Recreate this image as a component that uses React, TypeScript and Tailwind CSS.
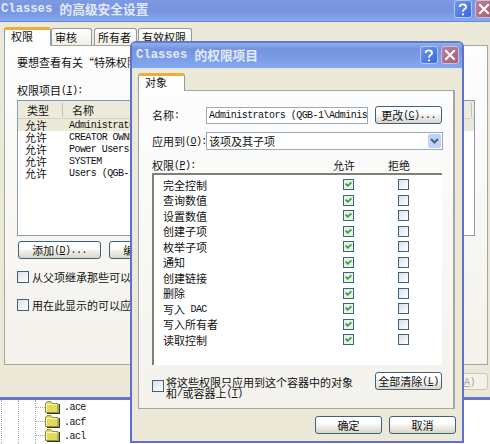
import React from 'react';

const MONO = "font-['Liberation_Mono','Noto_Sans_CJK_SC',monospace]";

/* Full-width text at 11px with half-width Latin runs at half that advance. */
function T({ children, className = '' }: { children: string; className?: string }) {
  const parts = children.match(/[\x00-\x7f]+|[^\x00-\x7f]+/g) || [];
  return (
    <span className={`whitespace-pre inline-flex items-center h-3 leading-3 ${className}`}>
      {parts.map((p, i) =>
        /^[\x00-\x7f]/.test(p) ? (
          <span key={i} className={`${MONO} text-[10px] tracking-[-0.55px] leading-3 mt-[2px]`}>
            {p.split(/(_[A-Z])/).map((s, j) => (s[0] === '_' ? <u key={j}>{s[1]}</u> : s))}
          </span>
        ) : (
          <span key={i} className="font-['Noto_Sans_CJK_SC',sans-serif] text-[11px] leading-3">{p}</span>
        )
      )}
    </span>
  );
}

function Title({ latin, cjk }: { latin: string; cjk: string }) {
  return (
    <span className="flex items-center whitespace-pre text-[#e3ebff] font-bold h-4">
      <span className={`${MONO} text-[12.2px] leading-4`}>{latin + ' '}</span>
      <span className="font-['Noto_Sans_CJK_SC',sans-serif] text-[12.7px] leading-4 font-bold">{cjk}</span>
    </span>
  );
}

function HelpButton() {
  return (
    <span className="w-[18px] h-[18px] shrink-0 rounded-[3px] border border-[#b4c8f6] bg-linear-to-br from-[#6f98ec] to-[#3b66dc] flex items-center justify-center">
      <svg width="10" height="13" viewBox="0 0 10 13" fill="none" stroke="#fff" strokeWidth="1.9">
        <path d="M1.8 4V3.3Q2.2 1.4 4.8 1.4Q8 1.4 8 3.9Q8 5.2 6.6 6Q5 7 5 8.8" />
        <path d="M4 11.4H6" />
      </svg>
    </span>
  );
}

function CloseButton() {
  return (
    <span className="w-[18px] h-[18px] shrink-0 rounded-[3px] border border-[#c6bfe4] bg-linear-to-br from-[#b98299] to-[#a85f70] flex items-center justify-center">
      <svg width="12" height="12" viewBox="0 0 12 12" stroke="#fff" strokeWidth="2">
        <path d="M1.3 1.3L10.7 10.7M10.7 1.3L1.3 10.7" />
      </svg>
    </span>
  );
}

function Button({ children, className = '' }: { children: string; className?: string }) {
  return (
    <span className={`h-[18px] shrink-0 rounded-[3px] border border-[#40627f] bg-linear-to-b from-white from-40% via-[#f5f4ef] to-[#d9d6cb] flex items-center justify-center ${className}`}>
      <T>{children}</T>
    </span>
  );
}

function Check({ on = false, className = '' }: { on?: boolean; className?: string }) {
  return (
    <span className={`shrink-0 border border-[#41627f] flex items-center justify-center ${on ? 'bg-[#e2f4e6]' : 'bg-linear-to-br from-[#dcdfe2] to-white'} ${className}`}>
      {on && (
        <svg width="7" height="7" viewBox="0 0 7 7" fill="none" stroke="#479447" strokeWidth="1.8">
          <path d="M.7 2.6L2.7 4.8L6.4 1.3" />
        </svg>
      )}
    </span>
  );
}

function Folder() {
  return (
    <svg width="15" height="13" viewBox="0 0 15 13">
      <path d="M2 12.3H14.3V3" fill="none" stroke="#33331f" strokeWidth="1.3" />
      <path d="M.5 11.5V2.5L2 .6H6L7.5 2.5H13V11.5Z" fill="#e1dc55" stroke="#8d8b48" />
      <path d="M1.5 10.5V3.5H12" fill="none" stroke="#fbf8bd" />
    </svg>
  );
}

const users = ['Administrators', 'CREATOR OWNER', 'Power Users', 'SYSTEM', 'Users (QGB-1'];
const rights = ['完全控制', '查询数值', '设置数值', '创建子项', '枚举子项', '通知', '创建链接', '删除', '写入 DAC', '写入所有者', '读取控制'];
const tab = 'h-[17px] shrink-0 border border-b-0 border-[#919b9c] rounded-t-[3px] bg-linear-to-b from-white to-[#f0efe6] flex items-start pt-[2px] pl-[3px]';

function SecurityWindow() {
  return (
    <div className="absolute left-0 top-0 w-[490px] h-[400px] bg-[#ece9d8] border-b-[3px] border-[#6674cb] flex flex-col overflow-hidden">
      <div className="h-[22px] shrink-0 bg-linear-to-b from-[#7f9ae3] via-[#7793df] to-[#83a9ef] border-b border-[#6c87cf] flex items-center pl-[1px] pb-[3px]">
        <Title latin="Classes" cjk="的高级安全设置" />
        <span className="ml-auto flex gap-[3px] -mr-[3px]"><HelpButton /><CloseButton /></span>
      </div>
      <div className="h-[23px] shrink-0 flex items-end pl-1">
        <span className="w-[47px] h-[19px] -mb-px z-1 shrink-0 border-x border-[#919b9c] border-t-[3px] border-t-[#f0ab3e] rounded-t-[3px] bg-[#fdfdfd] pl-[6px] flex"><T>权限</T></span>
        <span className={`${tab} w-[41px]`}><T>审核</T></span>
        <span className={`${tab} w-[43px] ml-[2px]`}><T>所有者</T></span>
        <span className={`${tab} w-[54px] ml-px`}><T>有效权限</T></span>
      </div>
      <div className="ml-1 w-[484px] h-[320px] shrink-0 border border-[#a3a89e] bg-linear-to-b from-[#fdfdfe] to-[#f3f2ec] flex flex-col items-start pl-3 pt-[10px]">
        <T>要想查看有关“特殊权限”的详细信息</T>
        <T className="mt-4">{'权限项目(_I):'}</T>
        <div className="mt-1 w-[458px] h-[136px] shrink-0 border border-[#849bb2] bg-white flex flex-col">
          <div className="h-[18px] shrink-0 bg-[#ebeadb] border-b border-[#d4d1c1] flex items-center pl-[9px]">
            <T className="w-[35px]">类型</T>
            <span className="h-[14px] border-l border-[#c5c2b0] mr-[9px]" />
            <T>名称</T>
            <span className="h-[14px] border-l border-[#c5c2b0] ml-auto mr-[2px]" />
          </div>
          {users.map((u, i) => (
            <div key={u} className={`h-3 shrink-0 flex pl-[7px] ${i === 0 ? 'bg-[#ece9d8]' : ''}`}>
              <T className="w-11">允许</T>
              <T>{u}</T>
            </div>
          ))}
        </div>
        <div className="mt-[5px] ml-px flex gap-2">
          <Button className="w-[83px]">{'添加(_D)...'}</Button>
          <Button className="w-[83px]">{'编辑(_E)...'}</Button>
        </div>
        <div className="mt-3 flex items-center gap-[3px]"><Check className="size-3" /><T>从父项继承那些可以</T></div>
        <div className="mt-4 flex items-center gap-[3px]"><Check className="size-3" /><T>用在此显示的可以应</T></div>
      </div>
      <div className="mt-2 flex justify-end pr-[2px]">
        <span className="w-[67px] h-[17px] rounded-[3px] border border-[#cbc8b8] bg-[#f3f1e8] text-[#aaa797] flex items-center justify-end pr-3"><T>{'应用(_A)'}</T></span>
      </div>
    </div>
  );
}

function EntryDialog() {
  return (
    <div className="absolute left-[130px] top-[41px] w-[334px] h-[402px] rounded-t-[6px] bg-[#ece9d8] border-2 border-[#6270ca] border-t-[#5f7ccd] flex flex-col overflow-hidden">
      <div className="h-[25px] shrink-0 bg-linear-to-b from-[#8fb0f0] via-[#7592df] via-25% to-[#82a9ef] flex items-center pl-1 pb-px">
        <Title latin="Classes" cjk="的权限项目" />
        <span className="ml-auto flex gap-[3px] pr-[3px]"><HelpButton /><CloseButton /></span>
      </div>
      <div className="grow border-t border-l border-[#dfe3f2] flex flex-col pl-[5px]">
        <div className="h-[21px] shrink-0 flex items-end">
          <span className="w-[47px] h-[18px] -mb-px z-1 border-x border-[#919b9c] border-t-[3px] border-t-[#f0ab3e] rounded-t-[3px] bg-[#fdfdfd] pl-[6px] flex"><T>对象</T></span>
        </div>
        <div className="w-[317px] h-[319px] shrink-0 border border-[#a0aaa0] border-r-2 bg-linear-to-b from-[#fdfdfe] to-[#f3f2ec] pl-[13px] pt-[15px] flex flex-col">
          <div className="h-[18px] shrink-0 flex items-center">
            <T className="w-[54px]">名称:</T>
            <span className="w-[162px] h-[17px] shrink-0 border border-[#94abc0] bg-white overflow-hidden pl-[2px] flex items-center"><T>{'Administrators (QGB-1\\Adminis'}</T></span>
            <Button className="w-[67px] ml-[7px]">{'更改(_C)...'}</Button>
          </div>
          <div className="mt-2 h-[18px] shrink-0 flex items-center">
            <T className="w-[54px] shrink-0">{'应用到(_O):'}</T>
            <span className="w-[237px] h-[18px] shrink-0 border border-[#94abc0] bg-white pl-[2px] pr-px flex items-center">
              <T>该项及其子项</T>
              <span className="ml-auto w-[13px] h-[14px] rounded-[2px] bg-[#c0d2fa] flex items-center justify-center">
                <svg width="9" height="6" viewBox="0 0 9 6" fill="none" stroke="#4d6185" strokeWidth="2"><path d="M1 1L4.5 4.5L8 1" /></svg>
              </span>
            </span>
          </div>
          <div className="mt-2 h-[14px] shrink-0 flex items-center">
            <T className="w-[181px]">{'权限(_P):'}</T>
            <T className="w-[55px]">允许</T>
            <T>拒绝</T>
          </div>
          <div className="mt-px w-[290px] h-[192px] shrink-0 bg-white border-t-2 border-l-2 border-[#827d75] pt-[2px] flex flex-col">
            {rights.map((r) => (
              <div key={r} className="h-[15.5px] shrink-0 flex items-center pl-[9px]">
                <T className="w-[180px]">{r}</T>
                <Check on className="size-[11px]" />
                <Check className="size-[11px] ml-11" />
              </div>
            ))}
          </div>
          <div className="mt-[7px] flex items-start">
            <Check className="size-3 mt-2" />
            <span className="ml-[2px] mt-1 flex flex-col items-start">
              <T className="h-[11px]!">将这些权限只应用到这个容器中的对象</T>
              <T className="h-[11px]!">{'和/或容器上(_T)'}</T>
            </span>
            <Button className="w-[67px] ml-auto mr-[11px]">{'全部清除(_L)'}</Button>
          </div>
        </div>
        <div className="mt-[7px] flex justify-end gap-[7px] pr-[6px]">
          <Button className="w-[67px]">确定</Button>
          <Button className="w-[67px]">取消</Button>
        </div>
      </div>
    </div>
  );
}

export default function App() {
  return (
    <div className="relative w-[490px] h-[444px] overflow-hidden bg-white text-[#111]">
      <div className="absolute left-0 top-[400px] w-[490px] h-11 overflow-hidden flex">
        <span className="ml-px w-[17px] border-l border-dotted border-[#aaa]" />
        <span className="w-[17px] border-l border-dotted border-[#aaa]" />
        <span className="border-l border-dotted border-[#aaa]" />
        <div className="flex flex-col">
          {['.ace', '.acf', '.acl'].map((name) => (
            <div key={name} className="h-[14.4px] shrink-0 flex items-center">
              <span className="w-[9px] border-t border-dotted border-[#aaa]" />
              <Folder />
              <T className="ml-1">{name}</T>
            </div>
          ))}
        </div>
      </div>
      <SecurityWindow />
      <EntryDialog />
    </div>
  );
}
